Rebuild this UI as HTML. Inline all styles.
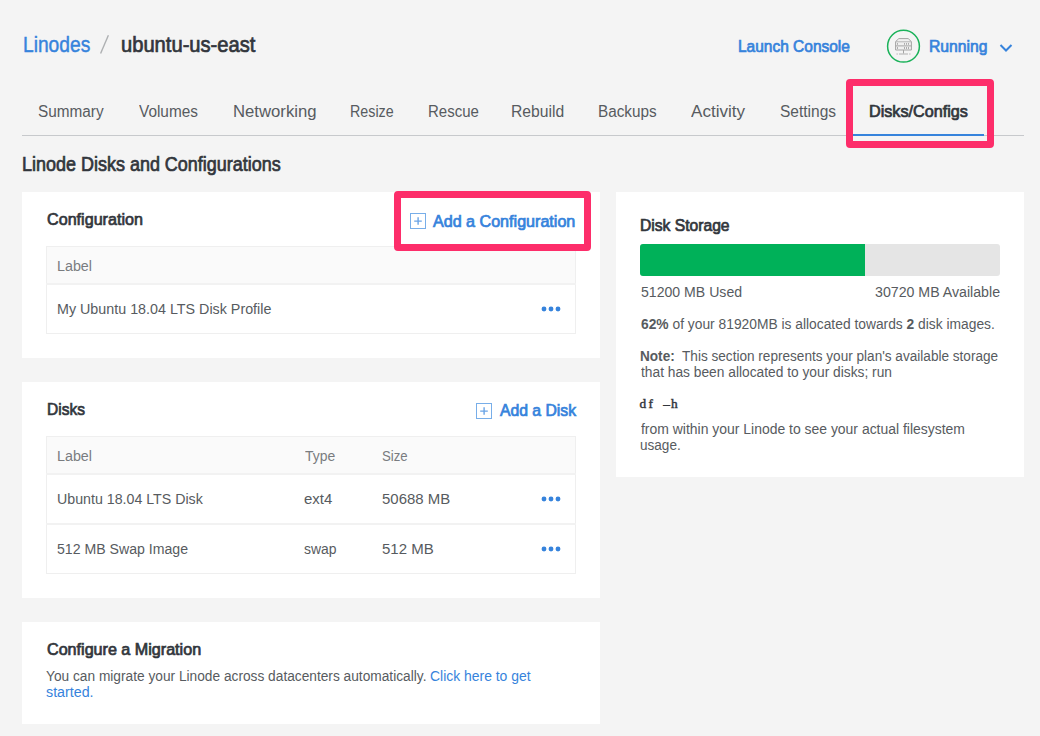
<!DOCTYPE html>
<html><head><meta charset="utf-8">
<style>
*{margin:0;padding:0;box-sizing:border-box}
html,body{width:1040px;height:736px;overflow:hidden;background:#f4f4f4;font-family:"Liberation Sans",sans-serif}
.t{position:absolute;white-space:nowrap;line-height:1;transform-origin:0 0}
.t b{font-weight:bold}
.blue{color:#3683dc}
.dark{color:#32363c}
.gray{color:#575b60}
.lg{color:#797c80}
.mono{font-family:"Liberation Serif",serif;color:#32363c}
.mono i{font-style:normal;display:inline-block;width:7.7px;text-align:center}
.b{font-weight:bold}
.panel{position:absolute;background:#fff}
.pink{position:absolute;border:7px solid #fd2d6a;border-radius:4px}
.tbl{position:absolute;border:1px solid #efefef}
.hdr{position:absolute;background:#fafafa}
.hl{position:absolute;height:2px;background:#f2f2f2}
.dots{position:absolute;width:19px;height:5px}
.dots i{position:absolute;top:0;width:5px;height:5px;border-radius:50%;background:#3683dc}
.plus{position:absolute;width:16px;height:16px;border:1px solid #7fb0ea}
.plus:before{content:"";position:absolute;left:3px;top:6.5px;width:8px;height:1px;background:#5b9be3}
.plus:after{content:"";position:absolute;left:6.5px;top:3px;width:1px;height:8px;background:#5b9be3}
</style></head>

<body>
<svg style="position:absolute;left:0;top:0" width="1040" height="60"><line x1="100.6" y1="53.6" x2="108.4" y2="35.3" stroke="#aeb0b2" stroke-width="1.4"/></svg>
<svg style="position:absolute;left:884px;top:27px" width="38" height="38" viewBox="0 0 38 38">
  <circle cx="19.5" cy="19.2" r="15.9" fill="none" stroke="#1bb25a" stroke-width="1.5"/>
  <path d="M11.6 14.6 L14.8 11.6 H24.2 L27.4 14.6 V23 H11.6 Z" fill="#f0f0f0" stroke="#a4a4a4" stroke-width="1"/>
  <line x1="11.6" y1="14.8" x2="27.4" y2="14.8" stroke="#b4b4b4" stroke-width="1"/>
  <line x1="11.6" y1="18.9" x2="27.4" y2="18.9" stroke="#a4a4a4" stroke-width="1"/>
  <path d="M13.5 16 V17.8 M20.5 16 V17.8 M22.5 16 V17.8 M24.5 16 V17.8 M13.5 20 V22 M20.5 20 V22 M22.5 20 V22 M24.5 20 V22" stroke="#a4a4a4" stroke-width="0.9"/>
  <line x1="19.5" y1="23" x2="19.5" y2="26.5" stroke="#a4a4a4" stroke-width="1"/>
  <path d="M12.5 27 H13.8 M15 27 H24 M25.2 27 H26.5" stroke="#b0b0b0" stroke-width="1"/>
</svg>
<svg style="position:absolute;left:999px;top:42.5px" width="14" height="10" viewBox="0 0 14 10">
  <path d="M1.5 2 L7 7.5 L12.5 2" fill="none" stroke="#3683dc" stroke-width="2"/>
</svg>
<div style="position:absolute;left:22px;top:135px;width:1002px;height:1px;background:#c7c9cc"></div>
<div style="position:absolute;left:853px;top:134px;width:131px;height:2px;background:#3683dc"></div>

<div class="panel" style="left:22px;top:192px;width:578px;height:166px"></div>
<svg style="position:absolute;left:410px;top:213px" width="16" height="16"><rect x="0.5" y="0.5" width="15" height="15" fill="none" stroke="#78aee9" stroke-width="1"/><path d="M4.2 8.1 H11.8 M8.1 4.2 V11.8" stroke="#6aa4e6" stroke-width="1.4"/></svg>
<div class="hdr" style="left:46px;top:246px;width:530px;height:38px"></div>
<div class="tbl" style="left:46px;top:246px;width:530px;height:88px"></div>
<div class="hl" style="left:46px;top:283px;width:530px"></div>
<svg style="position:absolute;left:538px;top:303px" width="24" height="12"><circle cx="6" cy="6" r="2.45" fill="#3683dc"/><circle cx="13" cy="6" r="2.45" fill="#3683dc"/><circle cx="20" cy="6" r="2.45" fill="#3683dc"/></svg>

<div class="panel" style="left:22px;top:382px;width:578px;height:216px"></div>
<svg style="position:absolute;left:476px;top:403px" width="16" height="16"><rect x="0.5" y="0.5" width="15" height="15" fill="none" stroke="#78aee9" stroke-width="1"/><path d="M4.2 8.1 H11.8 M8.1 4.2 V11.8" stroke="#6aa4e6" stroke-width="1.4"/></svg>
<div class="hdr" style="left:46px;top:436px;width:530px;height:38px"></div>
<div class="tbl" style="left:46px;top:436px;width:530px;height:138px"></div>
<div class="hl" style="left:46px;top:473px;width:530px"></div>
<div class="hl" style="left:46px;top:523px;width:530px"></div>
<svg style="position:absolute;left:538px;top:493px" width="24" height="12"><circle cx="6" cy="6" r="2.45" fill="#3683dc"/><circle cx="13" cy="6" r="2.45" fill="#3683dc"/><circle cx="20" cy="6" r="2.45" fill="#3683dc"/></svg>
<svg style="position:absolute;left:538px;top:543px" width="24" height="12"><circle cx="6" cy="6" r="2.45" fill="#3683dc"/><circle cx="13" cy="6" r="2.45" fill="#3683dc"/><circle cx="20" cy="6" r="2.45" fill="#3683dc"/></svg>

<div class="panel" style="left:22px;top:622px;width:578px;height:102px"></div>

<div class="panel" style="left:616px;top:192px;width:408px;height:285px"></div>
<div style="position:absolute;left:640px;top:244px;width:360px;height:32px;background:#e5e5e5;border-radius:3px;overflow:hidden"><div style="width:225px;height:32px;background:#00b159"></div></div>
<div class="pink" style="left:846px;top:79px;width:148px;height:69px"></div>
<div class="pink" style="left:394px;top:191px;width:197px;height:60px;border-bottom-width:7.5px"></div>

<div id="bc1" class="t blue" style="left:22.87px;top:34.01px;font-size:22px;-webkit-text-stroke:0.45px;transform:scaleX(0.8728)">Linodes</div>
<div id="bc2" class="t dark" style="left:120.79px;top:34.01px;font-size:22px;-webkit-text-stroke:0.72px;transform:scaleX(0.9159)">ubuntu-us-east</div>
<div id="lc" class="t blue" style="left:738.35px;top:38.01px;font-size:17px;-webkit-text-stroke:0.72px;transform:scaleX(0.9108)">Launch Console</div>
<div id="run" class="t blue" style="left:928.65px;top:38.01px;font-size:17px;-webkit-text-stroke:0.72px;transform:scaleX(0.9249)">Running</div>
<div id="tab1" class="t gray" style="left:38.33px;top:104.00px;font-size:16px;transform:scaleX(0.9577)">Summary</div>
<div id="tab2" class="t gray" style="left:139.28px;top:104.00px;font-size:16px;transform:scaleX(0.9595)">Volumes</div>
<div id="tab3" class="t gray" style="left:232.64px;top:104.00px;font-size:16px;transform:scaleX(1.0438)">Networking</div>
<div id="tab4" class="t gray" style="left:349.80px;top:104.00px;font-size:16px;transform:scaleX(0.8921)">Resize</div>
<div id="tab5" class="t gray" style="left:427.58px;top:104.00px;font-size:16px;transform:scaleX(0.9369)">Rescue</div>
<div id="tab6" class="t gray" style="left:511.10px;top:104.00px;font-size:16px;transform:scaleX(0.9800)">Rebuild</div>
<div id="tab7" class="t gray" style="left:597.77px;top:104.00px;font-size:16px;transform:scaleX(0.9565)">Backups</div>
<div id="tab8" class="t gray" style="left:691.26px;top:104.00px;font-size:16px;transform:scaleX(1.0667)">Activity</div>
<div id="tab9" class="t gray" style="left:779.51px;top:104.00px;font-size:16px;transform:scaleX(0.9690)">Settings</div>
<div id="tab10" class="t dark" style="left:869.10px;top:104.00px;font-size:16px;-webkit-text-stroke:0.72px;transform:scaleX(1.0103)">Disks/Configs</div>
<div id="title" class="t dark" style="left:21.88px;top:154.00px;font-size:20.5px;-webkit-text-stroke:0.72px;transform:scaleX(0.8767)">Linode Disks and Configurations</div>
<div id="cfgh" class="t dark" style="left:47.14px;top:211.00px;font-size:17px;-webkit-text-stroke:0.72px;transform:scaleX(0.9493)">Configuration</div>
<div id="addcfg" class="t blue" style="left:433.11px;top:214.00px;font-size:16px;-webkit-text-stroke:0.72px;transform:scaleX(1.0062)">Add a Configuration</div>
<div id="lbl1" class="t lg" style="left:57.09px;top:259.01px;font-size:14px;transform:scaleX(1.0203)">Label</div>
<div id="cfgrow" class="t gray" style="left:57.47px;top:302.01px;font-size:14px;transform:scaleX(1.0217)">My Ubuntu 18.04 LTS Disk Profile</div>
<div id="diskh" class="t dark" style="left:46.80px;top:401.00px;font-size:17px;-webkit-text-stroke:0.72px;transform:scaleX(0.9134)">Disks</div>
<div id="adddisk" class="t blue" style="left:499.76px;top:403.00px;font-size:16px;-webkit-text-stroke:0.72px;transform:scaleX(0.9830)">Add a Disk</div>
<div id="lbl2" class="t lg" style="left:57.09px;top:449.01px;font-size:14px;transform:scaleX(1.0203)">Label</div>
<div id="type" class="t lg" style="left:304.89px;top:449.01px;font-size:14px;transform:scaleX(0.9953)">Type</div>
<div id="size" class="t lg" style="left:382.16px;top:449.01px;font-size:14px;transform:scaleX(0.9403)">Size</div>
<div id="r1c1" class="t gray" style="left:57.09px;top:492.01px;font-size:14px;transform:scaleX(1.0148)">Ubuntu 18.04 LTS Disk</div>
<div id="r1c2" class="t gray" style="left:303.85px;top:492.01px;font-size:14px;transform:scaleX(1.0679)">ext4</div>
<div id="r1c3" class="t gray" style="left:382.05px;top:492.01px;font-size:14px;transform:scaleX(1.0685)">50688 MB</div>
<div id="r2c1" class="t gray" style="left:57.09px;top:542.01px;font-size:14px;transform:scaleX(1.0086)">512 MB Swap Image</div>
<div id="r2c2" class="t gray" style="left:303.88px;top:542.01px;font-size:14px;transform:scaleX(0.9955)">swap</div>
<div id="r2c3" class="t gray" style="left:382.03px;top:542.01px;font-size:14px;transform:scaleX(1.0728)">512 MB</div>
<div id="migh" class="t dark" style="left:46.69px;top:642.00px;font-size:16px;-webkit-text-stroke:0.72px;transform:scaleX(1.0074)">Configure a Migration</div>
<div id="mig1" class="t gray" style="left:45.71px;top:669.01px;font-size:14px;transform:scaleX(0.9797)">You can migrate your Linode across datacenters automatically.</div>
<div id="mig2" class="t blue" style="left:429.70px;top:669.01px;font-size:14px;transform:scaleX(0.9941)">Click here to get</div>
<div id="mig3" class="t blue" style="left:45.69px;top:685.01px;font-size:14px;transform:scaleX(1.0186)">started.</div>
<div id="dsh" class="t dark" style="left:640.31px;top:218.01px;font-size:16px;-webkit-text-stroke:0.72px;transform:scaleX(0.9776)">Disk Storage</div>
<div id="used" class="t gray" style="left:640.50px;top:285.00px;font-size:14px;transform:scaleX(1.0071)">51200 MB Used</div>
<div id="avail" class="t gray" style="left:874.89px;top:285.00px;font-size:14px;transform:scaleX(1.0124)">30720 MB Available</div>
<div id="pct" class="t gray" style="left:640.91px;top:317.00px;font-size:14px;transform:scaleX(0.9863)"><b>62%</b> of your 81920MB is allocated towards <b>2</b> disk images.</div>
<div id="note1" class="t gray" style="left:639.92px;top:349.00px;font-size:14px;transform:scaleX(0.9707)"><b>Note:</b>&nbsp; This section represents your plan's available storage</div>
<div id="note2" class="t gray" style="left:640.91px;top:365.00px;font-size:14px;transform:scaleX(0.9831)">that has been allocated to your disks; run</div>
<div id="df" class="t mono" style="left:639.44px;top:397.01px;font-size:13px;-webkit-text-stroke:0.45px;transform:scaleX(1.0224)"><i>d</i><i>f</i><i></i><i>&ndash;</i><i>h</i></div>
<div id="from1" class="t gray" style="left:640.90px;top:422.00px;font-size:14px;transform:scaleX(0.9960)">from within your Linode to see your actual filesystem</div>
<div id="from2" class="t gray" style="left:639.90px;top:438.01px;font-size:14px;transform:scaleX(0.9680)">usage.</div>
</body></html>
